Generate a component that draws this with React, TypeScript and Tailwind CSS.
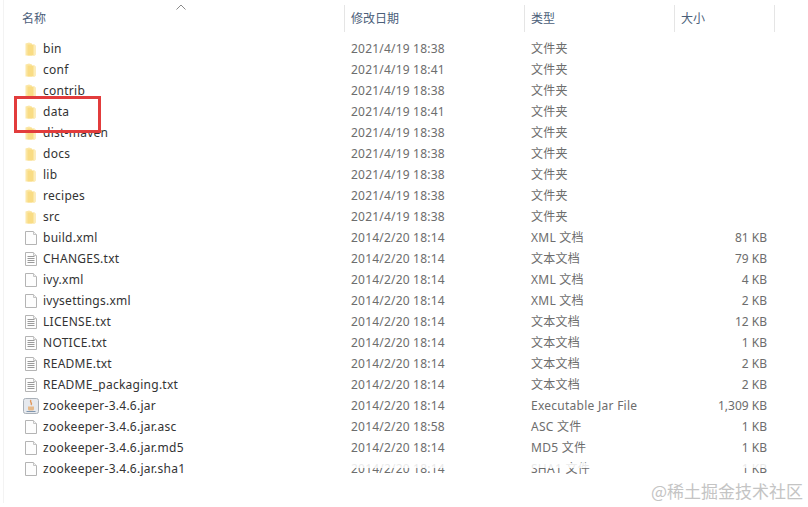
import React from 'react';

type Kind = 'folder' | 'blank' | 'text' | 'jar';

interface Row {
  name: string;
  date: string;
  type: string;
  size?: string;
  kind: Kind;
}

const rows: Row[] = [
  { name: 'bin', date: '2021/4/19 18:38', type: '文件夹', kind: 'folder' },
  { name: 'conf', date: '2021/4/19 18:41', type: '文件夹', kind: 'folder' },
  { name: 'contrib', date: '2021/4/19 18:38', type: '文件夹', kind: 'folder' },
  { name: 'data', date: '2021/4/19 18:41', type: '文件夹', kind: 'folder' },
  { name: 'dist-maven', date: '2021/4/19 18:38', type: '文件夹', kind: 'folder' },
  { name: 'docs', date: '2021/4/19 18:38', type: '文件夹', kind: 'folder' },
  { name: 'lib', date: '2021/4/19 18:38', type: '文件夹', kind: 'folder' },
  { name: 'recipes', date: '2021/4/19 18:38', type: '文件夹', kind: 'folder' },
  { name: 'src', date: '2021/4/19 18:38', type: '文件夹', kind: 'folder' },
  { name: 'build.xml', date: '2014/2/20 18:14', type: 'XML 文档', size: '81 KB', kind: 'blank' },
  { name: 'CHANGES.txt', date: '2014/2/20 18:14', type: '文本文档', size: '79 KB', kind: 'text' },
  { name: 'ivy.xml', date: '2014/2/20 18:14', type: 'XML 文档', size: '4 KB', kind: 'blank' },
  { name: 'ivysettings.xml', date: '2014/2/20 18:14', type: 'XML 文档', size: '2 KB', kind: 'blank' },
  { name: 'LICENSE.txt', date: '2014/2/20 18:14', type: '文本文档', size: '12 KB', kind: 'text' },
  { name: 'NOTICE.txt', date: '2014/2/20 18:14', type: '文本文档', size: '1 KB', kind: 'text' },
  { name: 'README.txt', date: '2014/2/20 18:14', type: '文本文档', size: '2 KB', kind: 'text' },
  { name: 'README_packaging.txt', date: '2014/2/20 18:14', type: '文本文档', size: '2 KB', kind: 'text' },
  { name: 'zookeeper-3.4.6.jar', date: '2014/2/20 18:14', type: 'Executable Jar File', size: '1,309 KB', kind: 'jar' },
  { name: 'zookeeper-3.4.6.jar.asc', date: '2014/2/20 18:58', type: 'ASC 文件', size: '1 KB', kind: 'blank' },
  { name: 'zookeeper-3.4.6.jar.md5', date: '2014/2/20 18:14', type: 'MD5 文件', size: '1 KB', kind: 'blank' },
  { name: 'zookeeper-3.4.6.jar.sha1', date: '2014/2/20 18:14', type: 'SHA1 文件', size: '1 KB', kind: 'blank' },
];

const FileIcon = ({ kind }: { kind: Kind }) => {
  if (kind === 'folder') {
    return (
      <svg width="11" height="14" viewBox="0 0 11 14">
        <path d="M0.5 1.5 L4 0.5 L7 1.5 V13.5 H0.5 Z" fill="#fbe7a6" />
        <path d="M2.5 2.5 H9 Q10.5 2.5 10.5 4 V12.5 Q10.5 13.5 9 13.5 H2.5 Z" fill="#f9dc84" />
        <path d="M8.5 2.5 H9 Q10.5 2.5 10.5 4 V12.5 Q10.5 13.5 9 13.5 H8.5 Z" fill="#fcecb8" />
      </svg>
    );
  }
  if (kind === 'jar') {
    return (
      <svg className="-ml-[2px]" width="16" height="16" viewBox="0 0 16 16">
        <rect x="0.5" y="0.5" width="15" height="15" rx="2" fill="#e6e9ee" stroke="#a9b0b8" />
        <path d="M8 2 C6 4 10 5 8 7" fill="none" stroke="#e0965a" strokeWidth="1.4" />
        <path d="M5 8.5 H11 V11 Q11 12.5 9.5 12.5 H6.5 Q5 12.5 5 11 Z" fill="#e6b98a" />
        <path d="M3.5 13.5 H12.5" stroke="#7f97b0" strokeWidth="1" />
      </svg>
    );
  }
  return (
    <svg width="12" height="14" viewBox="0 0 12 14">
      <path d="M0.5 0.5 H8.5 L11.5 3.5 V13.5 H0.5 Z" fill="#fdfdfd" stroke="#b4b4b4" />
      <path d="M8.5 0.5 V3.5 H11.5" fill="#f0f0f0" stroke="#c4c4c4" />
      {kind === 'text' && (
        <path d="M2.5 4.5 H9.5 M2.5 6.5 H9.5 M2.5 8.5 H9.5 M2.5 10.5 H9.5" stroke="#9a9a9a" strokeWidth="1" />
      )}
    </svg>
  );
};

const HeaderCell = ({ label }: { label: string }) => (
  <div className="h-[27px] border-l border-[#e5e5e5] pl-[6px] flex items-center text-[#4c607a]">{label}</div>
);

export default function App() {
  return (
    <div
      className="relative w-[808px] h-[507px] bg-white overflow-hidden text-[12px]"
      style={{ fontFamily: '"Noto Sans", "Noto Sans CJK SC", sans-serif' }}
    >
      <div className="ml-[3px] border-l border-[#f3f3f3] h-[503px]">
        <div className="grid grid-cols-[340px_180px_150px_100px_1px] pt-[5px]">
          <div className="h-[27px] pl-[18px] flex items-center text-[#4c607a]">名称</div>
          <HeaderCell label="修改日期" />
          <HeaderCell label="类型" />
          <HeaderCell label="大小" />
          <div className="h-[27px] bg-[#e5e5e5]" />
        </div>
        <div className="pt-[6px]">
          {rows.map((row) => (
            <div key={row.name} className="grid grid-cols-[340px_180px_150px_93px] h-[21px] items-center text-[#6d6d6d]">
              <div className="flex items-center pl-[21px] text-[#333333]">
                <div className="w-[18px] flex shrink-0 items-center">
                  <FileIcon kind={row.kind} />
                </div>
                <span className="whitespace-nowrap tracking-[0.26px]">{row.name}</span>
              </div>
              <div className="pl-[7px] whitespace-nowrap tracking-[0.2px]">{row.date}</div>
              <div className="pl-[7px] whitespace-nowrap tracking-[0.26px]">{row.type}</div>
              <div className="text-right whitespace-nowrap">{row.size}</div>
            </div>
          ))}
        </div>
      </div>

      <svg className="absolute left-[175px] top-[4px]" width="12" height="6" viewBox="0 0 12 6">
        <path d="M1.5 5.5 L6 1 L10.5 5.5" fill="none" stroke="#8a8a8a" strokeWidth="1" />
      </svg>

      <div className="absolute left-[14px] top-[96px] w-[87px] h-[37px] border-[3px] border-[#e23c3c]" />

      <div className="absolute left-[345px] top-[463px] w-[440px] h-[5px] bg-white/85" />

      <div
        className="absolute left-[651px] top-[480px] text-[17px] leading-[22px] text-[#c4c4c4]"
        style={{ fontFamily: '"Noto Sans CJK SC", sans-serif' }}
      >
        @稀土掘金技术社区
      </div>
    </div>
  );
}
